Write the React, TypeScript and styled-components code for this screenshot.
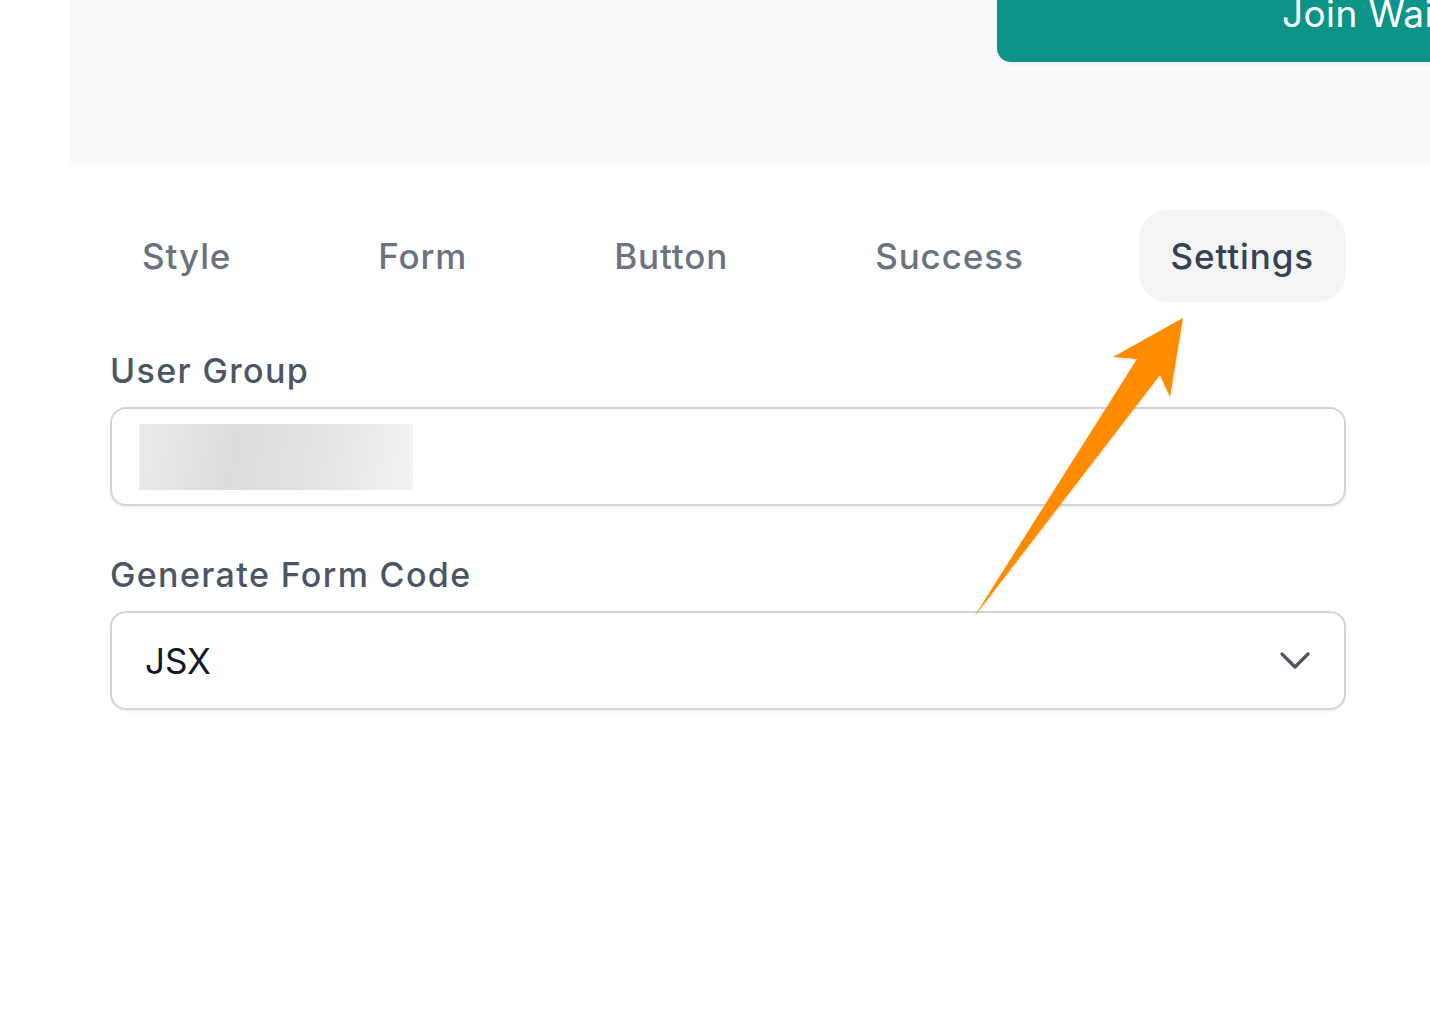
import React from "react";
import styled, { createGlobalStyle } from "styled-components";

const Global = createGlobalStyle`
  html, body { margin: 0; padding: 0; background: #ffffff; }
  body { font-family: Inter, "Noto Sans", "Liberation Sans", sans-serif; -webkit-font-smoothing: antialiased; }
  * { box-sizing: border-box; }
`;

const Page = styled.div`
  position: relative;
  width: 1430px;
  height: 1010px;
  overflow: hidden;
  padding-left: 68px;
`;

const Preview = styled.div`
  height: 167px;
  background: #f9fafb;
  display: flex;
  justify-content: flex-end;
  align-items: flex-end;
  padding-bottom: 105px;
  overflow: hidden;
`;

const JoinButton = styled.button`
  flex: none;
  width: 700px;
  height: 120px;
  margin-right: -267px;
  border: none;
  border-radius: 14px;
  background: #0d9488;
  color: #ffffff;
  font-family: Inter, "Noto Sans", sans-serif;
  font-size: 37px;
  letter-spacing: 0.01em;
  display: flex;
  align-items: flex-end;
  padding: 0 0 26px 285px;
  box-shadow: 0 2px 4px rgba(0, 0, 0, 0.06);
`;

const Editor = styled.div`
  width: 1236px;
  margin-left: 42px;
  padding-top: 43px;
`;

const Tabs = styled.div`
  display: flex;
  justify-content: space-between;
`;

const Tab = styled.div<{ $active?: boolean }>`
  height: 92px;
  padding: 0 32px;
  display: flex;
  align-items: center;
  border-radius: 28px;
  font-size: 35px;
  font-weight: 500;
  letter-spacing: 0.025em;
  color: ${(p) => (p.$active ? "#374151" : "#6b7280")};
  background: ${(p) => (p.$active ? "#f3f4f6" : "transparent")};
`;

const Field = styled.div`
  display: flex;
  flex-direction: column;
  gap: 16px;
  margin-top: 49px;
  & + & { margin-top: 49px; }
`;

const Label = styled.label`
  font-size: 34px;
  font-weight: 500;
  letter-spacing: 0.04em;
  line-height: 40px;
  color: #4b5563;
`;

const Box = styled.div`
  height: 99px;
  border: 2px solid #d1d5db;
  border-radius: 16px;
  background: #ffffff;
  box-shadow: 0 2px 3px rgba(0, 0, 0, 0.05);
  display: flex;
  align-items: center;
  padding: 0 34px 0 27px;
`;

const Redacted = styled.div`
  width: 274px;
  height: 66px;
  background: linear-gradient(100deg, #ececec 0%, #dcdcde 35%, #e4e4e5 65%, #f3f3f3 100%);
  filter: blur(0.6px);
`;

const SelectText = styled.span`
  flex: 1;
  padding-left: 6px;
  font-size: 35px;
  color: #111827;
`;

const Chevron = () => (
  <svg width="30" height="18" viewBox="0 0 30 18">
    <polyline points="2,2 15,15 28,2" fill="none" stroke="#4b5563" strokeWidth="3.2" strokeLinecap="round" strokeLinejoin="round" />
  </svg>
);

const ArrowLayer = styled.svg`
  position: absolute;
  left: 0;
  top: 0;
  pointer-events: none;
`;

export default function App() {
  return (
    <>
      <Global />
      <Page>
        <Preview>
          <JoinButton>Join Waitlist</JoinButton>
        </Preview>
        <Editor>
          <Tabs>
            <Tab>Style</Tab>
            <Tab>Form</Tab>
            <Tab>Button</Tab>
            <Tab>Success</Tab>
            <Tab $active>Settings</Tab>
          </Tabs>
          <Field>
            <Label>User Group</Label>
            <Box>
              <Redacted />
            </Box>
          </Field>
          <Field>
            <Label>Generate Form Code</Label>
            <Box>
              <SelectText>JSX</SelectText>
              <Chevron />
            </Box>
          </Field>
        </Editor>
        <ArrowLayer width="1430" height="1010" viewBox="0 0 1430 1010">
          <defs>
            <filter id="sh" x="-20%" y="-20%" width="140%" height="140%">
              <feDropShadow dx="0" dy="1" stdDeviation="1.5" floodColor="#000" floodOpacity="0.15" />
            </filter>
          </defs>
          <polygon
            points="974,617 1160,375 1170,397 1183,318 1113,357 1137,359"
            fill="#ff8c00"
            filter="url(#sh)"
          />
        </ArrowLayer>
      </Page>
    </>
  );
}
